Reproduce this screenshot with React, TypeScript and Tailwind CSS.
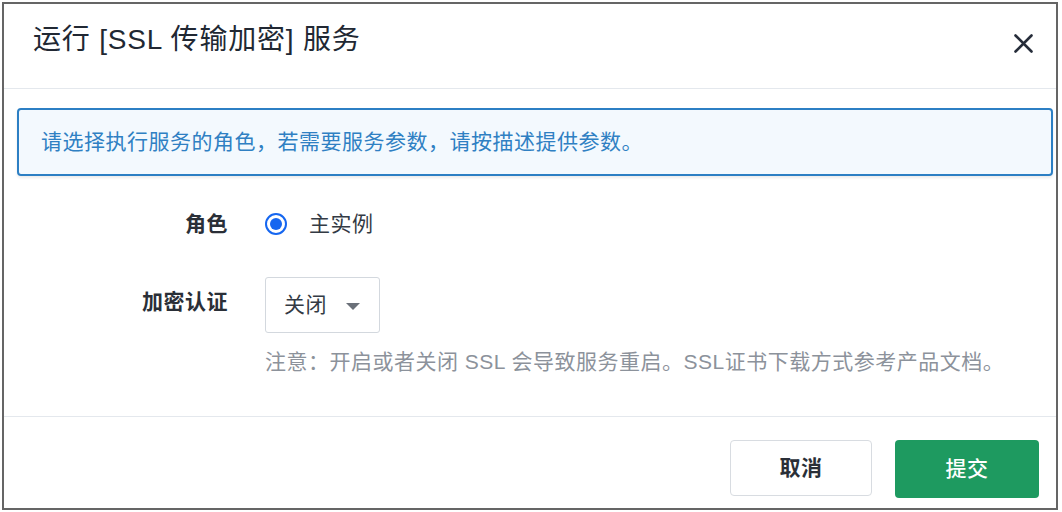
import React from 'react';

const FONT = '"Liberation Sans", "Noto Sans CJK SC", sans-serif';

const CloseIcon: React.FC = () => (
  <svg width="19" height="19" viewBox="0 0 19 19" fill="none">
    <path d="M1.5 1.5L17.5 17.5M17.5 1.5L1.5 17.5" stroke="#262d3a" strokeWidth="2.6" strokeLinecap="round" />
  </svg>
);

const Radio: React.FC = () => (
  <span className="flex h-[22px] w-[22px] items-center justify-center rounded-full border-2 border-[#1566f0] bg-white">
    <span className="h-[12px] w-[12px] rounded-full bg-[#1566f0]"></span>
  </span>
);

export default function App() {
  return (
    <div className="h-[512px] w-[1062px] bg-white pl-[2px] pt-[2px]" style={{ fontFamily: FONT }}>
      <div className="flex h-[508px] w-[1056px] flex-col overflow-hidden border-2 border-[#656565] bg-white">
        {/* header */}
        <div className="flex h-[85px] shrink-0 items-center justify-between border-b border-[#e4e8ed] pb-[12px] pl-[29px] pr-[23px]">
          <h2 className="text-[28px] leading-[36px] tracking-[0.8px] text-[#212833]">运行 [SSL 传输加密] 服务</h2>
          <button className="mt-[6px] flex items-center">
            <CloseIcon />
          </button>
        </div>

        {/* body */}
        <div className="h-[328px] shrink-0 border-b border-[#e4e8ed] pt-[19px]">
          <div className="ml-[13px] mr-[3px] flex h-[68px] items-center rounded-[4px] border-2 border-[#2c7fc4] bg-[#f3f9fe] pl-[22px] shadow-[0_2px_3px_rgba(0,0,0,0.08)]">
            <span className="text-[21px] tracking-[0.5px] text-[#2f80c3]">请选择执行服务的角色，若需要服务参数，请按描述提供参数。</span>
          </div>

          <div className="mt-[28px] flex h-[40px] items-center">
            <div className="w-[224px] text-right text-[21px] font-bold tracking-[0.5px] text-[#2a2f37]">角色</div>
            <div className="ml-[37px] flex items-center gap-[22px]">
              <Radio />
              <span className="text-[21px] tracking-[0.5px] text-[#333a44]">主实例</span>
            </div>
          </div>

          <div className="mt-[33px] flex items-start">
            <div className="mt-[10px] w-[224px] text-right text-[21px] font-bold leading-[30px] tracking-[0.5px] text-[#2a2f37]">加密认证</div>
            <div className="ml-[37px] flex flex-col">
              <div className="flex h-[56px] w-[115px] items-center justify-between rounded-[3px] border border-[#d3d8de] bg-white pl-[18px] pr-[19px]">
                <span className="text-[21px] tracking-[0.5px] text-[#333a44]">关闭</span>
                <svg width="14" height="7" viewBox="0 0 14 7" className="mt-[2px]">
                  <path d="M0 0H14L7 7Z" fill="#6b7079" />
                </svg>
              </div>
              <p className="mt-[14px] whitespace-nowrap text-[21px] leading-[30px] tracking-[0.5px] text-[#8c929b]">
                注意：开启或者关闭 SSL 会导致服务重启。SSL证书下载方式参考产品文档。
              </p>
            </div>
          </div>
        </div>

        {/* footer */}
        <div className="flex flex-1 items-start justify-end gap-[23px] pr-[17px] pt-[23px]">
          <button className="flex h-[56px] w-[142px] items-center justify-center rounded-[4px] border border-[#d8dce1] bg-white text-[21px] font-bold tracking-[0.5px] text-[#2a2f38]">
            取消
          </button>
          <button className="flex h-[58px] w-[144px] items-center justify-center rounded-[4px] bg-[#1e9a60] text-[21px] font-medium tracking-[0.5px] text-white">
            提交
          </button>
        </div>
      </div>
    </div>
  );
}
